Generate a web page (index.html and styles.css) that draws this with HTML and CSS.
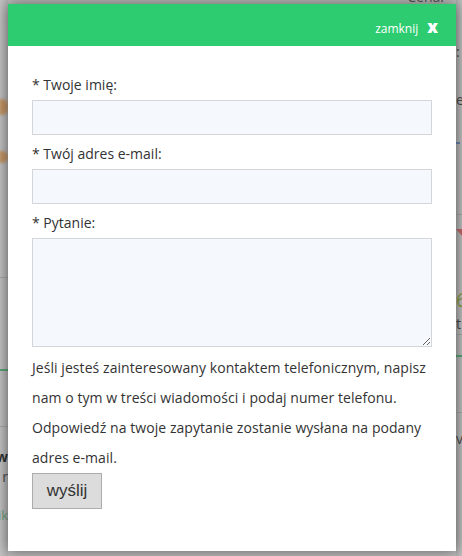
FILE: index.html
```html
<!DOCTYPE html>
<html lang="pl">
<head>
<meta charset="utf-8">
<title>Zapytanie</title>
<link rel="stylesheet" href="styles.css">
</head>
<body>
<div class="backdrop">
  <div class="strip strip-left">
    <div class="gap g97"></div>
    <div class="blob blob-a"></div>
    <div class="gap g36"></div>
    <div class="blob blob-b"></div>
    <div class="rule r1"></div>
    <div class="rule-green r2"></div>
    <div class="rule r3"></div>
    <div class="bit bit-bold">ew</div>
    <div class="bit">t r</div>
    <div class="gap g18"></div>
    <div class="bit bit-green">ik</div>
  </div>
  <div class="strip strip-mid">
    <div class="top-word">Cena:</div>
  </div>
  <div class="strip strip-right">
    <div class="gap g42"></div>
    <div class="bit">:</div>
    <div class="gap g28"></div>
    <div class="bit">e</div>
    <div class="gap g32"></div>
    <div class="dash"></div>
    <div class="rule r4"></div>
    <div class="tri"></div>
    <div class="gap g50"></div>
    <div class="bit bit-big">6</div>
    <div class="bit">t</div>
    <div class="rule r5"></div>
    <div class="rule-green r6"></div>
    <div class="rule r7"></div>
    <div class="gap g16"></div>
    <div class="bit">v</div>
  </div>
</div>

<div class="modal">
  <div class="modal-head">
    <span class="close-label">zamknij</span>
    <span class="close-x">x</span>
  </div>
  <form class="modal-body">
    <label class="field-label" for="f-name">* Twoje imię:</label>
    <input class="field" id="f-name" type="text">
    <label class="field-label" for="f-mail">* Twój adres e-mail:</label>
    <input class="field" id="f-mail" type="text">
    <label class="field-label" for="f-q">* Pytanie:</label>
    <textarea class="field field-area" id="f-q"></textarea>
    <p class="note">Jeśli jesteś zainteresowany kontaktem telefonicznym, napisz<br>nam o tym w treści wiadomości i podaj numer telefonu.<br>Odpowiedź na twoje zapytanie zostanie wysłana na podany<br>adres e-mail.</p>
    <button class="send" type="button">wyślij</button>
  </form>
</div>
</body>
</html>
```

FILE: styles.css
```css
html, body {
  margin: 0;
  padding: 0;
}

body {
  width: 462px;
  height: 556px;
  overflow: hidden;
  position: relative;
  background: #bdbdbd;
  font-family: "Open Sans", "DejaVu Sans", sans-serif;
  color: #333;
}

/* dimmed page behind the dialog */
.backdrop {
  display: grid;
  grid-template-columns: 8px 1fr 6px;
  height: 556px;
}

.strip {
  display: flex;
  flex-direction: column;
  overflow: hidden;
  min-width: 0;
}

.strip-left {
  background: linear-gradient(90deg, #c4c4c4, #b4b4b4);
}

.strip-right {
  background: linear-gradient(90deg, #b0b0b0, #c2c2c2);
}

.strip-mid {
  align-items: flex-end;
  padding-right: 12px;
}

.top-word {
  font-size: 14px;
  line-height: 14px;
  margin-top: -10px;
  color: #555;
}

.gap { flex: none; }
.g97 { height: 97px; }
.g36 { height: 36px; }
.g18 { height: 18px; }
.g42 { height: 42px; }
.g28 { height: 28px; }
.g32 { height: 32px; }
.g50 { height: 50px; }
.g16 { height: 16px; }

.blob {
  flex: none;
  background: #c58d55;
  border-radius: 0 6px 6px 0;
  filter: blur(1.5px);
  opacity: 0.85;
}

.blob-a { height: 16px; width: 9px; margin-top: 2px; margin-left: -1px; }
.blob-b { height: 12px; width: 9px; margin-left: -1px; }

.rule {
  flex: none;
  border-bottom: 1px solid #a6a6a6;
}

.rule-green {
  flex: none;
  border-bottom: 2px solid #5aa574;
}

.r1 { height: 114px; }
.r2 { height: 91px; }
.r3 { height: 55px; }
.r4 { height: 70px; }
.r5 { height: 0; }
.r6 { height: 20px; }
.r7 { height: 55px; }

.bit {
  flex: none;
  display: flex;
  justify-content: flex-end;
  white-space: nowrap;
  font-size: 14px;
  line-height: 20px;
  color: #4a4a4a;
}

.strip-right .bit {
  justify-content: flex-start;
}

.bit-bold {
  font-weight: 700;
  color: #333;
  margin-top: 20px;
}

.bit-green {
  color: #6f9e7c;
  font-size: 13px;
}

.bit-big {
  font-size: 20px;
  line-height: 28px;
  color: #8c9a4a;
}

.dash {
  flex: none;
  width: 4px;
  height: 2px;
  background: #6c83b0;
}

.tri {
  flex: none;
  width: 0;
  height: 0;
  border-left: 6px solid transparent;
  border-top: 7px solid #c06a68;
  margin-top: 14px;
}

/* dialog */
.modal {
  position: absolute;
  left: 8px;
  top: 4px;
  width: 448px;
  height: 547px;
  background: #fff;
  box-shadow: 0 0 14px rgba(0, 0, 0, 0.5);
}

.modal-head {
  height: 42px;
  box-sizing: border-box;
  background: #2ecc71;
  display: flex;
  justify-content: flex-end;
  align-items: baseline;
  padding: 15px 18px 0 0;
  color: #fff;
}

.close-label {
  font-size: 12px;
  line-height: 16px;
}

.close-x {
  font-size: 17px;
  line-height: 16px;
  font-weight: 800;
  margin-left: 9px;
}

.modal-body {
  padding: 29px 24px 0;
  margin: 0;
}

.field-label {
  display: block;
  font-size: 14px;
  line-height: 20px;
  margin-bottom: 5px;
  color: #333;
}

.field {
  display: block;
  width: 100%;
  height: 35px;
  box-sizing: border-box;
  border: 1px solid #d4d6d9;
  background: #f5f8fc;
  margin: 0 0 9px;
  padding: 4px 8px;
  font-family: "Open Sans", sans-serif;
  font-size: 14px;
  border-radius: 0;
  outline: none;
}

.field-area {
  height: 109px;
  margin-bottom: 6px;
  resize: vertical;
}

.note {
  margin: 0;
  font-size: 14px;
  line-height: 30px;
  letter-spacing: 0.06px;
  color: #333;
}

.send {
  display: block;
  width: 70px;
  height: 36px;
  box-sizing: border-box;
  border: 1px solid #acacac;
  background: #dcdcdc;
  color: #333;
  font-family: "Liberation Sans", Arial, sans-serif;
  font-size: 17px;
  padding: 0;
  border-radius: 0;
}
```
